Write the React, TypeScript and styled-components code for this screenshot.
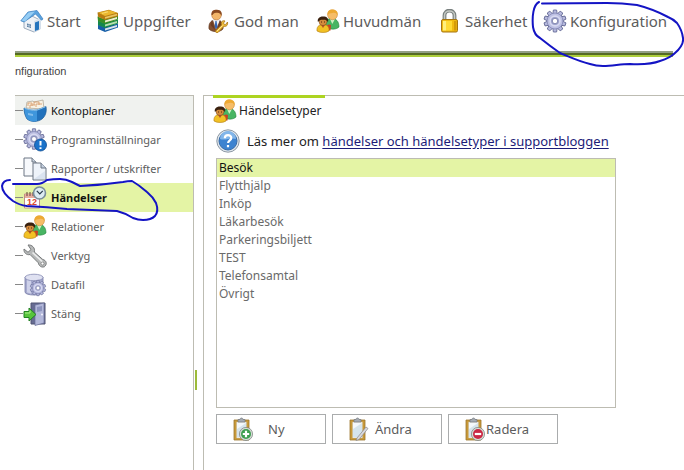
import React, { useState } from 'react';
import styled, { createGlobalStyle } from 'styled-components';

const GlobalStyle = createGlobalStyle`
  * { box-sizing: border-box; }
  body { margin: 0; background: #fff; color: #5c5c5c; font: 13px/18px "Noto Sans", sans-serif; }
  button { font: inherit; color: inherit; background: none; border: 0; padding: 0; cursor: pointer; }
`;

const line = '#bdbcb2';

const Page = styled.div`
  min-height: 100vh;
  padding-left: 15px;
  display: flex;
  flex-direction: column;
  overflow: hidden;
`;

const TopNav = styled.nav`
  height: 51px;
  padding: 8px 0 0 5px;
  display: flex;
  align-items: flex-start;
`;

const NavItem = styled.button<{ $w: number }>`
  position: relative;
  flex: none;
  width: ${(p) => p.$w}px;
  height: 25px;
  display: flex;
  align-items: center;
  gap: 3px;
  font-size: 15px;
  line-height: 24px;
  white-space: nowrap;
`;

const Rule = styled.div`
  height: 6px;
  margin-right: 11px;
  background: #adcf3b;
  border-top: 2px solid #93a085;
  box-shadow: inset 0 2px #556a24;
`;

const Breadcrumb = styled.div`
  height: 38px;
  padding-top: 5px;
  font: 11px/18px "Liberation Sans", sans-serif;
  color: #444;
`;

const Columns = styled.div`
  flex: 1;
  display: flex;
`;

const Sidebar = styled.nav`
  flex: none;
  width: 179px;
  border: solid ${line};
  border-width: 1px 1px 0 0;
`;

const SideItem = styled.button<{ $tone?: 'hover' | 'current' }>`
  position: relative;
  width: 100%;
  height: 29px;
  display: flex;
  align-items: center;
  text-align: left;
  font-size: 11px;
  background: ${(p) => (p.$tone === 'current' ? '#e4f4a5' : p.$tone === 'hover' ? '#f0f2ef' : 'none')};
  color: ${(p) => (p.$tone ? '#111' : 'inherit')};
  font-weight: ${(p) => (p.$tone === 'current' ? 700 : 400)};
  &::before { content: ""; width: 8px; height: 1px; background: #888; }
  svg:first-of-type { margin-right: 4px; }
`;

const Splitter = styled.div`
  flex: none;
  width: 9px;
  padding-left: 1px;
  display: flex;
  align-items: center;
  &::before { content: ""; width: 2px; height: 20px; margin-top: 195px; background: #9dbb3a; }
`;

const Panel = styled.main`
  flex: 1;
  min-width: 0;
  padding: 0 12px 26px;
  border: solid ${line};
  border-width: 1px 0 0 1px;
`;

const Tab = styled.h1`
  width: 112px;
  height: 29px;
  margin: -1px 0 0 -3px;
  border-top: 3px solid #add421;
  display: flex;
  align-items: center;
  gap: 2px;
  font-size: 12px;
  font-weight: 400;
  color: #222;
  white-space: nowrap;
`;

const Help = styled.p`
  height: 34px;
  margin: 0;
  display: flex;
  align-items: center;
  gap: 7px;
  color: #222;
  a { color: #1c1c78; text-underline-offset: 2px; }
`;

const List = styled.select`
  display: block;
  width: 100%;
  max-width: 400px;
  height: 250px;
  padding: 0;
  border: 1px solid ${line};
  border-radius: 0;
  outline: 0;
  background: #fff;
  font: 12px/18px "Noto Sans", sans-serif;
  color: #6a6a6a;
  scrollbar-width: none;
  option { height: 18px; min-height: 18px; padding: 0 2px; line-height: 18px; }
  option:checked { background: #e4f4a5 linear-gradient(#e4f4a5, #e4f4a5); color: #111; }
`;

const Actions = styled.div`
  display: flex;
  gap: 6px;
  margin-top: 6px;
`;

const Action = styled.button<{ $gap: number }>`
  width: 110px;
  height: 30px;
  border: 1px solid #aaacad;
  padding-left: 13px;
  display: flex;
  align-items: center;
  gap: ${(p) => p.$gap}px;
`;

const Ink = styled.svg`
  position: absolute;
  z-index: 1;
  overflow: visible;
  pointer-events: none;
  fill: none;
  stroke: #1414c4;
  stroke-width: 2;
  stroke-linecap: round;
  stroke-linejoin: round;
`;
const NavInk = styled(Ink)`left: -10px; top: -6px;`;
const SideInk = styled(Ink)`left: -13px; top: -4px;`;

const Icon = styled.svg.attrs({ width: 24, height: 24, viewBox: '0 0 24 24', 'aria-hidden': true })`
  flex: none;
  display: block;
`;

const House = () => (
  <Icon>
    <path d="M4 12 12 7l8 4v9l-6 3-10-4z" fill="#eef2f7" stroke="#8798ac" strokeWidth=".8" />
    <path d="M14 12 21 9v11l-7 3z" fill="#d5e0ec" />
    <path d="M.8 11.8 8 3l9-1.5 6 8.5-1.500 1.200L15.500 5 4 13z" fill="#5ba3df" stroke="#397dbd" strokeWidth=".7" />
    <path d="M1.500 11.500 8.500 3.500l6.500-1L5 12.500z" fill="#96cdf4" />
    <path d="M15 13.500 19 12v8.500L15 22z" fill="#2373bd" />
    <path d="M7 14.500l4 1v3.500l-4-1.300z" fill="#52779d" />
    <path d="M9 14.800v4M7 16.200l4 1.200" stroke="#dce7f1" strokeWidth=".6" />
  </Icon>
);

const Books = () => (
  <Icon>
    <path d="M2 15.5 8 18l14-3.500v4L9 23l-7-3z" fill="#175fa8" />
    <path d="M9 19.500 21 16v2L9 21.600z" fill="#d9e5ea" />
    <path d="M2 11.500 8 14l14-3.500v4L9 19l-7-3z" fill="#15884c" />
    <path d="M9 15.500 21 12v2L9 17.600z" fill="#b9dfae" />
    <path d="M1.500 7.500 8 10l14-3.500v4L9 15l-7-3z" fill="#398e24" />
    <path d="M9 11.500 21 8v2L9 13.600z" fill="#f3edcf" />
    <path d="M1.500 3.500 13 .8 22 4v3.200L9 11 2 7.800z" fill="#b77b12" />
    <path d="M2.500 3.800 13 1.200l8 2.500L9 6.900z" fill="#ebb72f" />
    <path d="M9 8 21 4.800v1.600L9 9.800z" fill="#e9c663" />
    <path d="M6 4.400l6-1.600" stroke="#fbdd74" />
  </Icon>
);

const Guardian = () => (
  <Icon>
    <path d="M2 20c-.7-6 2-9 7-9s8 3 7 9c-3 3.500-11 3.500-14 0z" fill="#855030" stroke="#5a321c" strokeWidth=".6" />
    <path d="m6 11 3 9 4-9z" fill="#f0f3f5" />
    <path d="m8.400 12-.8 6 1.400 2 1.500-2-.9-6z" fill="#3667b3" />
    <path d="m5 11-1.500 5L8 21zM13 11l2 5-5 5z" fill="#6c3c22" />
    <circle cx="9.500" cy="6.200" r="4.800" fill="#f2b66a" stroke="#a7652f" strokeWidth=".5" />
    <path d="M4.500 6C4 1.500 7 .5 10 .7c4 0 5.500 3 4.500 6.300-.5-2-2-3-4-3.200-2 0-4 .2-5 2.200z" fill="#8a4a21" />
    <path d="m8.500 22 6-6c-1-3 1-5 3.500-4l-1.700 2.300 2 1.600L20.500 13c.5 3-1 5-3.500 4.200L11 23.500c-1.500.5-2.500 0-2.500-1.500z" fill="#eebd3c" stroke="#aa7517" strokeWidth=".8" />
    <path d="m10 22 5.500-5.500" stroke="#ffe591" />
  </Icon>
);

const Family = () => (
  <Icon>
    <path d="M9 17c0-5 2-7.500 6.500-7.500S23 12 23 18c-3 3-10 3-14-1z" fill="#48b563" stroke="#23843d" strokeWidth=".6" />
    <path d="m14 10 2.300 5L19 10z" fill="#d1f0c3" />
    <circle cx="16.500" cy="5.800" r="4.900" fill="#f6bd68" stroke="#bc7a2e" strokeWidth=".5" />
    <path d="M11.500 6c-.3-4 2-5.700 5.500-5.500 3.800.3 5.200 3 4.500 6-1-2.400-2.400-3-5-2.600-2.300.2-3.900.5-5 2.100z" fill="#eda933" />
    <path d="M9 18c1-2 4-3.500 6-2l-.5 5.500H9z" fill="#c84324" />
    <path d="M1 22c-.4-4 1.500-6.500 6-6.500s6.400 2.500 6 6.500c-3 2-9 2-12 0z" fill="#f2c124" stroke="#b07c15" strokeWidth=".6" />
    <path d="m5 16 2 3 2-3z" fill="#b95128" />
    <circle cx="7" cy="12.600" r="4" fill="#d48a3c" stroke="#5a3210" strokeWidth=".4" />
    <path d="M2 13c-1-3 1-5.500 5-5.500s6 2 5 5.500c-1.500-2-2.500-2.500-5-2.300-2.500-.1-3.500.3-5 2.300z" fill="#3a210f" />
    <path d="M5.200 13h.8M8.200 13H9" stroke="#341706" />
  </Icon>
);

const Lock = () => (
  <Icon>
    <path d="M6.500 12V6.500C6.500 0 16.500 0 16.500 6.500V12" fill="none" stroke="#79807f" strokeWidth="3.800" />
    <path d="M6.500 12V6.500C6.500 .5 16.500 .5 16.500 6.500V12" fill="none" stroke="#c5c9c4" strokeWidth="1.500" />
    <rect x="3.500" y="10.500" width="16" height="12.500" rx="1.500" fill="#f1bb12" stroke="#a57512" />
    <path d="M5 12h3v9.500H5z" fill="#fff07e" />
    <path d="M8 12h6v9.500H8z" fill="#ffda35" />
    <path d="M16 12h2.500v9.500H16z" fill="#d59b0a" />
  </Icon>
);

const teeth = [0, 36, 72, 108, 144, 180, 216, 252, 288, 324];
const GearShape = ({ cx, cy, s = 1 }: { cx: number; cy: number; s?: number }) => (
  <g transform={`translate(${cx} ${cy}) scale(${s})`}>
    {teeth.map((a) => (
      <path key={a} transform={`rotate(${a})`} d="m-2.200-7 .6-4h3.200l.6 4z" fill="#b7bade" stroke="#686d98" strokeWidth=".9" />
    ))}
    <circle r="8" fill="#bdc0e3" stroke="#7b80ad" strokeWidth=".7" />
    <circle r="5.800" fill="#d8daf1" />
    <circle r="4" fill="#9a9fc9" />
    <circle r="2.700" fill="#fff" stroke="#696f9d" strokeWidth=".7" />
  </g>
);

const Gear = () => (
  <Icon><GearShape cx={12} cy={12} /></Icon>
);

const FileBox = () => (
  <Icon>
    <path d="m3 9 1-6 6-1 1 1 9-2 1 9z" fill="#f8f2e4" stroke="#a99f8e" strokeWidth=".7" />
    <path d="M5 7V4h4v3m2-1V3h5v3m-9 3V6h5m1 2V5h6" fill="none" stroke="#d69460" strokeWidth=".8" />
    <path d="M1 9c4 2 8 2.500 13 2l9-3.500c1 6-1 10-4 12.500-4 3-11 3.500-15 0C2 17 1 13 1 9z" fill="#2272bc" stroke="#185997" strokeWidth=".7" />
    <path d="M1.500 9.500c4 2 8 2.300 12.500 2v10.500c-4 1-8 0-10-2.500-1.600-3-2.500-6-2.500-10z" fill="#3f96dc" />
    <path d="M1.500 9.200c4 2 8 2.300 12.500 2l8.500-3.400" stroke="#8ac4ef" fill="none" />
    <path d="m5 14 5 1v2l-5-1z" fill="#80bceb" />
  </Icon>
);

const GearAlert = () => (
  <Icon>
    <GearShape cx={11} cy={11} s={0.93} />
    <circle cx="17.500" cy="17" r="6" fill="#1b73ca" stroke="#0b4a91" strokeWidth=".8" />
    <path d="M17.500 13v4.500M17.500 19.200v1.800" stroke="#fff" strokeWidth="2" />
  </Icon>
);

const Documents = () => (
  <Icon>
    <path d="M1 1h8l4 4v14H1z" fill="#f7f9fc" stroke="#6c7784" />
    <path d="M9 1v4h4" fill="#ccd5e1" stroke="#6c7784" />
    <path d="M10 6h8l5 5v12H10z" fill="#eef3fa" stroke="#6c7784" />
    <path d="M18 6v5h5" fill="#c4cfdf" stroke="#6c7784" />
    <path d="m11 22 11-8v8z" fill="#dae3f0" />
  </Icon>
);

const CalendarClock = () => (
  <Icon>
    <path d="M1.500 8h15v14h-15z" fill="#fff" stroke="#c29087" />
    <path d="M2 8h14v4H2z" fill="#e6afa0" />
    <path d="M4 6v4M7 6v4M10 6v4" stroke="#66423b" />
    <text x="9" y="19" textAnchor="middle" fontFamily="Liberation Sans, sans-serif" fontWeight="700" fontSize="9" fill="#db4630">12</text>
    <circle cx="16.500" cy="7" r="6" fill="#dcecf2" stroke="#788d9b" strokeWidth="1.600" />
    <path d="m13.800 4.800 3 3 3-3" stroke="#26394a" strokeWidth="1.200" fill="none" />
  </Icon>
);

const Wrench = () => (
  <Icon>
    <path d="M5 1c4-.5 7.500 3 6.300 7l8.500 7.500c4 1 4.500 5 1.500 7.300-3 1-5.500-1-6-4L7 10.500C3.500 11.500.5 8.500 1 5l4 3.300L8 5.500z" fill="#b7b9b9" stroke="#777a7b" />
    <path d="m9.500 8.500 10 9.300" stroke="#eceded" strokeWidth="1.600" />
    <circle cx="19.500" cy="19.500" r="1.500" fill="#fff" stroke="#777" strokeWidth=".7" />
  </Icon>
);

const DataGear = () => (
  <Icon>
    <path d="M2 4v15c0 4 18 4 18 0V4z" fill="#a7abcf" stroke="#777ca6" strokeWidth=".8" />
    <path d="M4 6h4v14.500l-4-1z" fill="#ced1e9" />
    <ellipse cx="11" cy="4.500" rx="9" ry="3.300" fill="#dfe1f1" stroke="#858ab2" strokeWidth=".8" />
    <GearShape cx={15} cy={15} s={0.7} />
  </Icon>
);

const Exit = () => (
  <Icon>
    <path d="M8 1h14v21H8z" fill="#676c92" stroke="#505473" />
    <path d="m12 3 9-2v20l-9 2.500z" fill="#b3b8da" stroke="#686e98" strokeWidth=".7" />
    <path d="m14 5 5-1v5l-5 1z" fill="#8d94be" />
    <circle cx="19" cy="12.500" r="1" fill="#f4f4ff" />
    <path d="M1 9.500h5V6l7 6.500L6 19v-3.500H1z" fill="#57c43c" stroke="#238124" />
    <path d="M2 11h5V8.500" fill="none" stroke="#adf08b" />
  </Icon>
);

const Question = () => (
  <Icon>
    <circle cx="12" cy="12" r="11.200" fill="#dfe6ec" stroke="#8e99a5" />
    <circle cx="12" cy="12" r="9" fill="#3d83d0" stroke="#376ba8" />
    <path d="M4 10a8 8 0 0 1 16 0c-5-2-11 2-16 0z" fill="#82b6ea" />
    <path d="M8.800 9.300c0-4.200 6.500-4.200 6.500-.3 0 2.400-3.200 2.400-3.200 5M12 16v2.200" fill="none" stroke="#fff" strokeWidth="2.200" />
  </Icon>
);

const Clipboard = ({ children }: { children: React.ReactNode }) => (
  <Icon>
    <path d="M4 3h15v20H4z" fill="#c99a39" stroke="#9c762f" strokeWidth=".8" />
    <path d="M6.500 5h10v16h-10z" fill="#f4f8fb" stroke="#c0b18b" strokeWidth=".5" />
    <path d="m7 12 9-6v14H7z" fill="#d5e4ec" />
    <path d="M8 2.500h2C10 .5 13 .5 13 2.500h2V5H8z" fill="#a5abb2" stroke="#72777e" strokeWidth=".7" />
    {children}
  </Icon>
);

const Badge = ({ color, plus }: { color: string; plus?: boolean }) => (
  <>
    <circle cx="16" cy="17" r="6.600" fill="#d5dcd5" stroke="#777d7b" strokeWidth=".7" />
    <circle cx="16" cy="17" r="5" fill={color} />
    <path d={plus ? 'M12.800 17h6.400M16 13.800v6.400' : 'M12.800 17h6.400'} stroke="#fff" strokeWidth="2.200" />
  </>
);

const types = ['Besök', 'Flytthjälp', 'Inköp', 'Läkarbesök', 'Parkeringsbiljett', 'TEST', 'Telefonsamtal', 'Övrigt'];

const sections = [
  { label: 'Kontoplaner', Glyph: FileBox, tone: 'hover' as const },
  { label: 'Programinställningar', Glyph: GearAlert },
  { label: 'Rapporter / utskrifter', Glyph: Documents },
  { label: 'Händelser', Glyph: CalendarClock, tone: 'current' as const },
  { label: 'Relationer', Glyph: Family },
  { label: 'Verktyg', Glyph: Wrench },
  { label: 'Datafil', Glyph: DataGear },
  { label: 'Stäng', Glyph: Exit },
];

export default function App() {
  const [selected, setSelected] = useState('Besök');
  return (
    <Page>
      <GlobalStyle />
      <TopNav>
        <NavItem $w={76}><House />Start</NavItem>
        <NavItem $w={111}><Books />Uppgifter</NavItem>
        <NavItem $w={109}><Guardian />God man</NavItem>
        <NavItem $w={122}><Family />Huvudmän</NavItem>
        <NavItem $w={105}><Lock />Säkerhet</NavItem>
        <NavItem $w={122}>
          <Gear />Konfiguration
          <NavInk width="152" height="68" viewBox="533 2 152 68" aria-hidden="true">
            <path d="M539 2C533 5 532 17 533 27C534 33 536 36 540 38Q550 46 560 53C570 57 578 61 590 64Q596 66 603 66C613 66 620 64 630 64Q650 65 660 61Q670 58 675 53Q684 45 683 38Q682 30 677 23Q673 19 668 17Q653 9 637 5Q622 3 607 3L542 3.500" />
          </NavInk>
        </NavItem>
      </TopNav>
      <Rule />
      <Breadcrumb>nfiguration</Breadcrumb>
      <Columns>
        <Sidebar>
          {sections.map(({ label, Glyph, tone }) => (
            <SideItem key={label} $tone={tone}>
              <Glyph />{label}
              {tone === 'current' && (
                <SideInk width="157" height="42" viewBox="2 179 157 42" aria-hidden="true">
                  <path d="M10 180Q3 180 2 186Q2 193 13 201Q19 205 27 206Q47 207 67 209L117 211Q125 213 133 218Q138 220 143 220Q151 220 155 216Q159 211 156 203Q153 197 147 192Q139 185 132 181Q128 181 123 182Q102 185 80 186Q76 184 72 182Q66 179 60 179Q53 179 47 180Q42 184 37 184L13 184" />
                </SideInk>
              )}
            </SideItem>
          ))}
        </Sidebar>
        <Splitter />
        <Panel>
          <Tab><Family />Händelsetyper</Tab>
          <Help>
            <Question />
            <span>Läs mer om <a href="#handelser">händelser och händelsetyper i supportbloggen</a></span>
          </Help>
          <List size={13} aria-label="Händelsetyper" value={selected} onChange={(e) => setSelected(e.target.value)}>
            {types.map((t) => <option key={t}>{t}</option>)}
          </List>
          <Actions>
            <Action $gap={14}><Clipboard><Badge color="#3e9f50" plus /></Clipboard>Ny</Action>
            <Action $gap={5}>
              <Clipboard>
                <path d="m11 21 9-11 2 1.500-9 11-3 1z" fill="#d9d9dc" stroke="#85858b" strokeWidth=".7" />
              </Clipboard>
              Ändra
            </Action>
            <Action $gap={0}><Clipboard><Badge color="#ca2945" /></Clipboard>Radera</Action>
          </Actions>
        </Panel>
      </Columns>
    </Page>
  );
}
